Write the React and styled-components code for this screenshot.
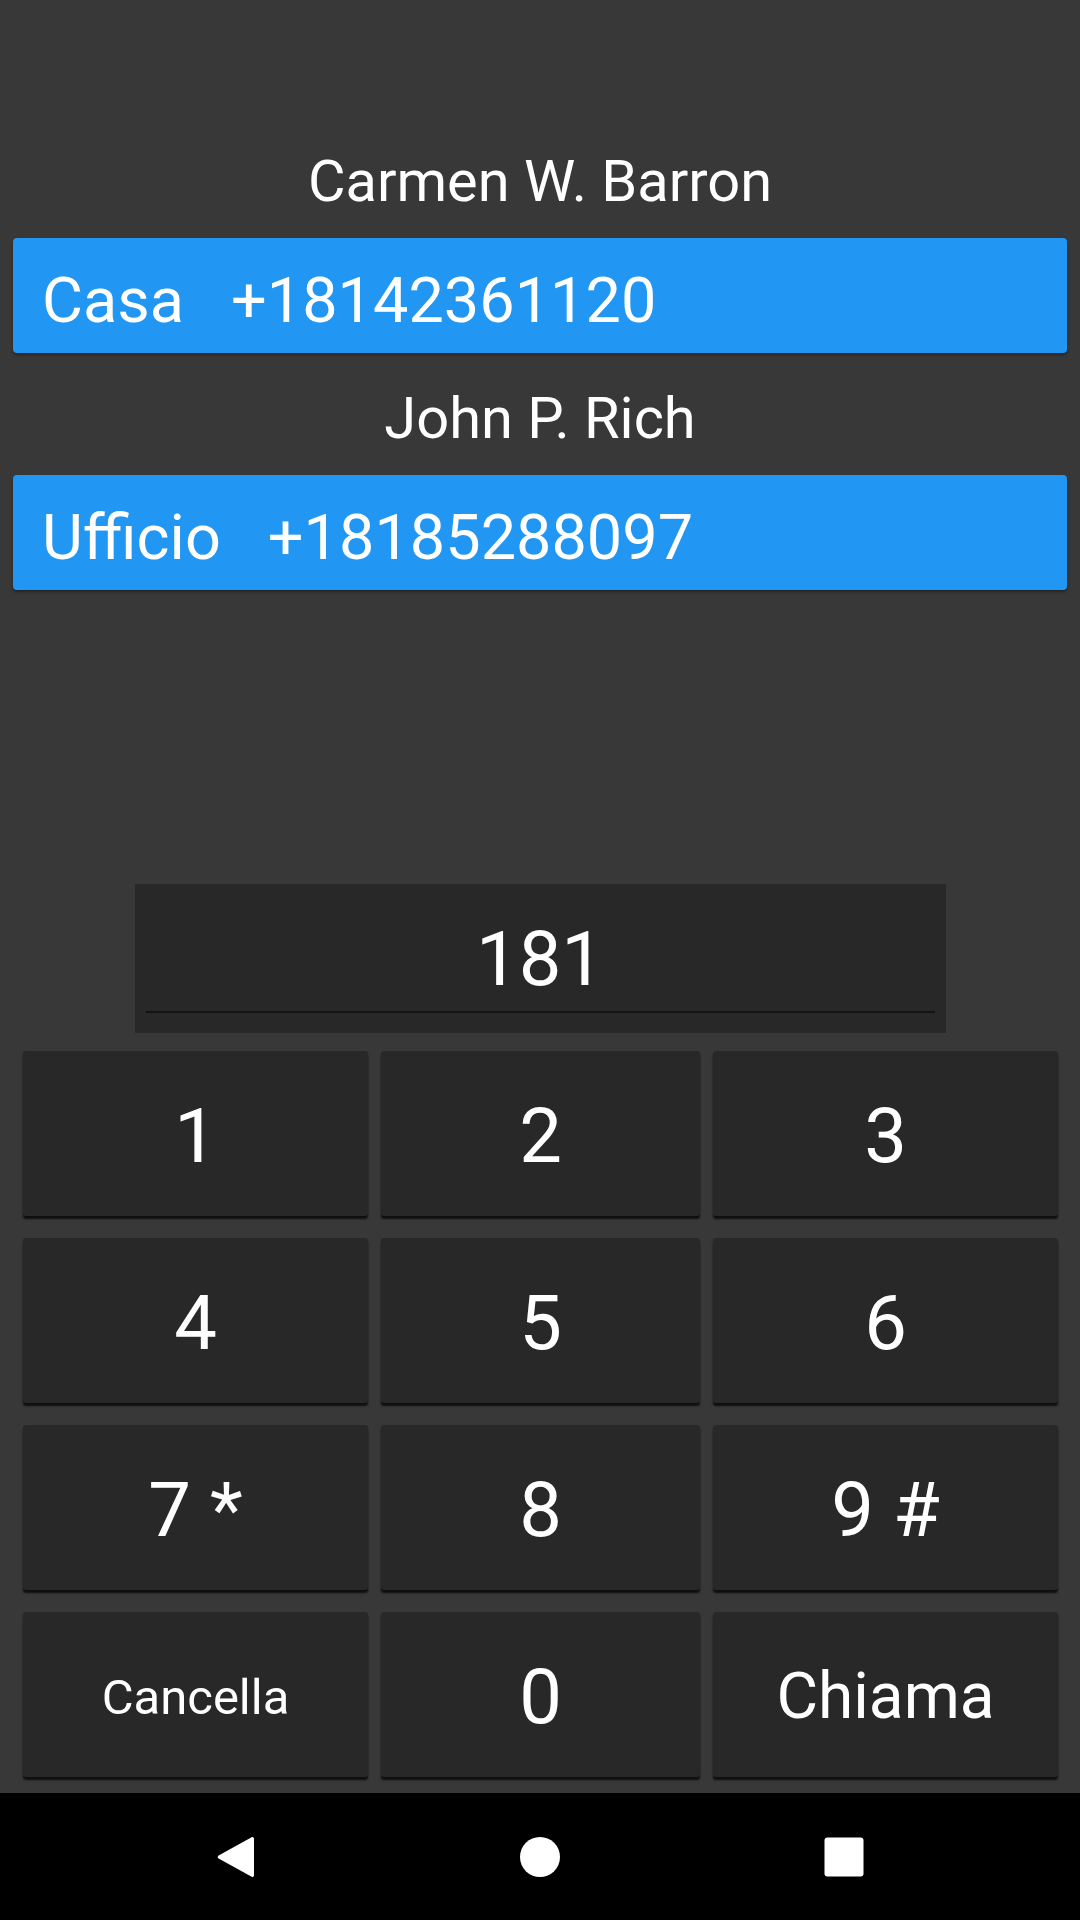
import React from 'react';
import styled, { createGlobalStyle } from 'styled-components';

// contacts that match the digits typed so far
const contacts = [
	{ name: 'Carmen W. Barron', label: 'Casa', number: '+18142361120' },
	{ name: 'John P. Rich', label: 'Ufficio', number: '+18185288097' },
];

const keys = [
	{ text: '1' },
	{ text: '2' },
	{ text: '3' },
	{ text: '4' },
	{ text: '5' },
	{ text: '6' },
	{ text: '7 *' },
	{ text: '8' },
	{ text: '9 #' },
	{ text: 'Cancella', size: 49 },
	{ text: '0' },
	{ text: 'Chiama', size: 64 },
];

const GlobalStyle = createGlobalStyle`
	html, body {
		margin: 0;
		padding: 0;
		background: #383838;
	}
	body {
		font-family: Roboto, "Noto Sans", "Liberation Sans", sans-serif;
		color: #fff;
	}
`;

const Screen = styled.div`
	width: 1080px;
	height: 1920px;
	display: flex;
	flex-direction: column;
	background: #383838;
	overflow: hidden;
`;

const Main = styled.div`
	flex: 1;
	display: flex;
	flex-direction: column;
	justify-content: space-between;
`;

const ContactList = styled.div`
	padding: 147px 13px 0;
	display: flex;
	flex-direction: column;
`;

const ContactName = styled.div`
	font-size: 57.75px;
	line-height: 68px;
	text-align: center;
	margin-top: ${(p) => (p.first ? '0' : '31px')};
`;

const NumberBar = styled.div`
	margin-top: 23px;
	height: 115px;
	box-sizing: border-box;
	padding: 10px 0 0 29px;
	display: flex;
	align-items: center;
	background: #2196f3;
	border-radius: 4px;
	box-shadow: 0 2px 3px rgba(0, 0, 0, 0.35);
	font-size: 63px;
	line-height: 74px;
	white-space: nowrap;
`;

const NumberValue = styled.span`
	margin-left: 47px;
`;

const Dialer = styled.div`
	padding-bottom: 16px;
	display: flex;
	flex-direction: column;
`;

const InputBox = styled.div`
	width: 811px;
	margin: 0 auto;
	box-sizing: border-box;
	padding: 31px 11px 20px;
	background: #282828;
`;

const InputValue = styled.div`
	font-size: 76px;
	line-height: 89px;
	text-align: center;
`;

const Underline = styled.div`
	margin-top: 7px;
	height: 2px;
	background: #141414;
`;

const KeyGrid = styled.div`
	margin-top: 18px;
	padding-left: 23px;
	display: grid;
	grid-template-columns: 345px 319px 345px;
	grid-auto-rows: 165px;
	column-gap: 13px;
	row-gap: 22px;
`;

const Key = styled.div`
	display: flex;
	align-items: center;
	justify-content: center;
	padding-top: 5px;
	box-sizing: border-box;
	background: #282828;
	border-radius: 3px;
	box-shadow: 0 3px 2px rgba(0, 0, 0, 0.75);
	font-size: ${(p) => p.size || 76}px;
	line-height: 1;
	white-space: pre;
`;

const NavBar = styled.div`
	height: 127px;
	background: #000;
	display: flex;
	align-items: center;
	justify-content: center;
	gap: 262px;
`;

const NavIcon = styled.svg`
	width: 42px;
	height: 42px;
	fill: #fff;
	display: block;
`;

const Dialpad = () => (
	<Screen>
		<Main>
			<ContactList>
				{contacts.map((c, i) => (
					<React.Fragment key={c.number}>
						<ContactName first={i === 0}>{c.name}</ContactName>
						<NumberBar>
							<span>{c.label}</span>
							<NumberValue>{c.number}</NumberValue>
						</NumberBar>
					</React.Fragment>
				))}
			</ContactList>

			<Dialer>
				<InputBox>
					<InputValue>181</InputValue>
					<Underline />
				</InputBox>
				<KeyGrid>
					{keys.map((k) => (
						<Key key={k.text} size={k.size}>
							{k.text}
						</Key>
					))}
				</KeyGrid>
			</Dialer>
		</Main>

		<NavBar>
			<NavIcon viewBox="0 0 42 42">
				<path d="M39 2.8v36.4c0 1.5-1.6 2.3-2.8 1.4L3.6 22.6c-1.1-.8-1.1-2.4 0-3.2L36.2 1.4c1.2-.9 2.8-.1 2.8 1.4z" />
			</NavIcon>
			<NavIcon viewBox="0 0 42 42">
				<circle cx="21" cy="21" r="20" />
			</NavIcon>
			<NavIcon viewBox="0 0 42 42">
				<rect x="1.5" y="1.5" width="39" height="39" rx="3" />
			</NavIcon>
		</NavBar>
	</Screen>
);

const App = () => (
	<>
		<GlobalStyle />
		<Dialpad />
	</>
);

export default App;
